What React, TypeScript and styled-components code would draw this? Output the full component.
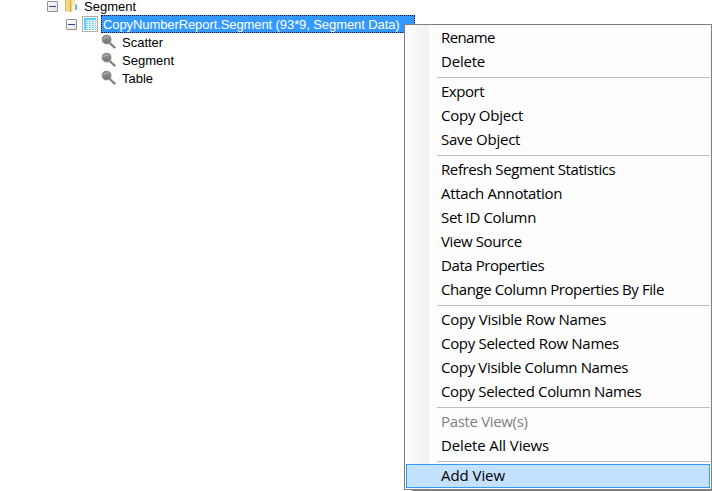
import React from 'react';
import styled, { createGlobalStyle } from 'styled-components';

const GlobalStyle = createGlobalStyle`
  * { box-sizing: border-box; }
  html, body { margin: 0; padding: 0; background: #fff; overflow: hidden; }
`;

const Screen = styled.main`
  position: relative;
  width: 712px;
  height: 491px;
  overflow: hidden;
  background: #fff;
`;

const Tree = styled.div`
  display: flex;
  flex-direction: column;
  margin-top: -3px;
  font: 13px/18px 'Liberation Sans', Arial, sans-serif;
  color: #000;
`;

const TreeRow = styled.div<{ $indent: number }>`
  display: flex;
  align-items: center;
  height: 18px;
  padding-left: ${(p) => p.$indent}px;
  white-space: pre;
  svg { display: block; flex: none; }
`;

const Toggle = styled.span`
  display: flex;
  align-items: center;
  justify-content: center;
  width: 11px;
  height: 11px;
  margin: 1px 5px 0 0;
  border: 1px solid #919191;
  border-radius: 1px;
  background: linear-gradient(135deg, #fff, #e4e4e4);
  &::before {
    content: '';
    width: 7px;
    height: 1px;
    background: #27409b;
  }
`;

const Label = styled.span<{ $gap: number }>`
  margin-left: ${(p) => p.$gap}px;
  padding-top: 1px;
`;

const SelectedLabel = styled.span`
  width: 314px;
  height: 18px;
  margin-left: 3px;
  padding-left: 1px;
  border: 1px dotted #001a33;
  background: #3399ff;
  color: #fff;
  line-height: 18px;
  letter-spacing: -0.09px;
`;

const Menu = styled.div`
  position: absolute;
  left: 404px;
  top: 24px;
  width: 308px;
  height: 466px;
  padding: 1px;
  border: 1px solid #808080;
  background: linear-gradient(to right, #fdfdfd 1px, #fbfbfb 2px, #f1f1f1 24px, #fdfdfd 24px);
  box-shadow: 7px 3px 2px -1px #777;
  font: 15px/22px 'Open Sans', 'Noto Sans', sans-serif;
  color: #000;
`;

const MenuItem = styled.div<{ $spacing: number; $disabled?: boolean; $active?: boolean }>`
  display: flex;
  align-items: flex-start;
  height: 24px;
  width: 304px;
  padding-left: ${(p) => (p.$active ? 34 : 35)}px;
  border: ${(p) => (p.$active ? '1px solid #3399ff' : '0')};
  background: ${(p) => (p.$active ? '#c4e1ff' : 'transparent')};
  color: ${(p) => (p.$disabled ? '#808080' : '#000')};
  line-height: ${(p) => (p.$active ? 20 : 22)}px;
  letter-spacing: ${(p) => p.$spacing}px;
  white-space: pre;
`;

const Separator = styled.div`
  height: 6px;
  margin-left: 31px;
  padding-top: 3px;
  &::before {
    content: '';
    display: block;
    width: 273px;
    height: 1px;
    background: #bdbdbd;
  }
`;

const FolderIcon = () => (
  <svg width="16" height="16" viewBox="0 0 16 16">
    <path d="M2 2h5l1-1h4v11l-4 2H7L2 13z" fill="#efd27b" />
    <path d="M2 2h1.2v11L2 12.7z" fill="#d9b85a" />
    <path d="M7 2.5 8.5 1v12L7 14.5z" fill="#d6b050" />
    <path d="M8.5 1H12v11l-3.5 2z" fill="#f7e6a6" />
    <path d="M9.5 8h2v4.5h-2z" fill="#fffaf0" />
    <path d="M12.2 6.5H14V12h-1.8z" fill="#5ab2dc" />
    <path d="M4 3v9" stroke="#f8e4a2" />
  </svg>
);

const TableIcon = () => (
  <svg width="16" height="16" viewBox="0 0 16 16">
    <rect x=".5" y=".5" width="15" height="15" fill="#fff" stroke="#b0b0b0" />
    <rect x="2" y="2" width="12" height="12" fill="#d9f3fb" />
    <path d="M2 2h12v2H2zM2 4h2v10H2z" fill="#4fd3f6" />
    <path d="M4 5.5h10M4 7.5h10M4 9.5h10M4 11.5h10M4 13.5h10" stroke="#8ecbe0" strokeDasharray="2 1" />
  </svg>
);

const MagnifierIcon = () => (
  <svg width="16" height="16" viewBox="0 0 16 16">
    <path d="m8.8 8.8 5.4 5.2" stroke="#737373" strokeWidth="2.3" />
    <path d="m9.8 9 4.3 4" stroke="#b4b4b4" strokeWidth=".7" />
    <circle cx="5.6" cy="5.6" r="4.4" fill="#858585" stroke="#8f8f8f" strokeWidth="1.1" />
    <path d="M2.8 5.4c.5-2.4 3.2-3 4.9-1.5" fill="none" stroke="#b2b2b2" strokeWidth="1.3" />
    <path d="M4 7.5c1.5 1 3.5.6 4.4-.8" fill="none" stroke="#666" />
  </svg>
);

type Entry = { text: string; spacing: number; disabled?: boolean; active?: boolean };

const groups: Entry[][] = [
  [{ text: 'Rename', spacing: -0.62 }, { text: 'Delete', spacing: -0.2 }],
  [
    { text: 'Export', spacing: -0.46 },
    { text: 'Copy Object', spacing: -0.24 },
    { text: 'Save Object', spacing: -0.25 },
  ],
  [
    { text: 'Refresh Segment Statistics', spacing: -0.4 },
    { text: 'Attach Annotation', spacing: -0.33 },
    { text: 'Set ID Column', spacing: -0.34 },
    { text: 'View Source', spacing: -0.38 },
    { text: 'Data Properties', spacing: -0.42 },
    { text: 'Change Column Properties By File', spacing: -0.42 },
  ],
  [
    { text: 'Copy Visible Row Names', spacing: -0.26 },
    { text: 'Copy Selected Row Names', spacing: -0.3 },
    { text: 'Copy Visible Column Names', spacing: -0.34 },
    { text: 'Copy Selected Column Names', spacing: -0.35 },
  ],
  [
    { text: 'Paste View(s)', spacing: -0.34, disabled: true },
    { text: 'Delete All Views', spacing: -0.12 },
  ],
  [{ text: 'Add View', spacing: -0.06, active: true }],
];

export default function App() {
  return (
    <Screen>
      <GlobalStyle />
      <Tree>
        <TreeRow $indent={47}>
          <Toggle />
          <FolderIcon />
          <Label $gap={5}>Segment</Label>
        </TreeRow>
        <TreeRow $indent={66}>
          <Toggle />
          <TableIcon />
          <SelectedLabel>CopyNumberReport.Segment (93*9, Segment Data)</SelectedLabel>
        </TreeRow>
        {['Scatter', 'Segment', 'Table'].map((name) => (
          <TreeRow key={name} $indent={101}>
            <MagnifierIcon />
            <Label $gap={5}>{name}</Label>
          </TreeRow>
        ))}
      </Tree>
      <Menu>
        {groups.map((group, index) => (
          <React.Fragment key={group[0].text}>
            {index > 0 && <Separator />}
            {group.map((item) => (
              <MenuItem
                key={item.text}
                $spacing={item.spacing}
                $disabled={item.disabled}
                $active={item.active}
              >
                {item.text}
              </MenuItem>
            ))}
          </React.Fragment>
        ))}
      </Menu>
    </Screen>
  );
}
